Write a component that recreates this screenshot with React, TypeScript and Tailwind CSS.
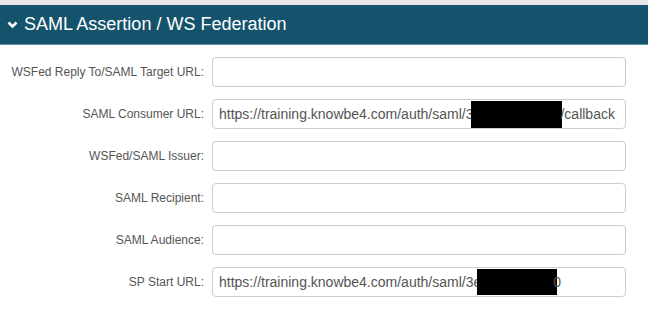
import React from 'react';

const font = { fontFamily: '"Liberation Sans", Arial, sans-serif' };

const Field: React.FC<{ label: string; children?: React.ReactNode }> = ({ label, children }) => (
  <div className="flex items-center h-[30px]">
    <label className="w-[212px] shrink-0 pr-[8px] text-right text-[12px] text-[#555]">{label}</label>
    <div className="w-[414px] h-[30px] border border-[#ccc] rounded-[4px] bg-white px-[6px] flex items-center text-[14px] text-[#555] whitespace-nowrap overflow-hidden">
      {children}
    </div>
  </div>
);

const App: React.FC = () => {
  return (
    <div className="w-[648px] h-[318px] bg-white overflow-hidden" style={font}>
      <div className="h-[5px] bg-[#e8e8e8]" />
      <div className="h-[40px] bg-[#15536d] border-b border-[#5f8ea1] flex items-center pl-[7px] text-white text-[18px]">
        <svg width="11" height="8" viewBox="0 0 11 8" className="mr-[6px] mt-[1px]">
          <path d="M1.5 1.5 L5.5 5.5 L9.5 1.5" fill="none" stroke="white" strokeWidth="2.6" />
        </svg>
        SAML Assertion / WS Federation
      </div>
      <div className="flex flex-col gap-[12px] pt-[12px]">
        <Field label="WSFed Reply To/SAML Target URL:" />
        <Field label="SAML Consumer URL:">
          <span>https://training.knowbe4.com/auth/saml/3</span>
          <span className="inline-block w-[91px] h-[27px] bg-black ml-[-2px] shrink-0" />
          <span className="ml-[-2px]">/callback</span>
        </Field>
        <Field label="WSFed/SAML Issuer:" />
        <Field label="SAML Recipient:" />
        <Field label="SAML Audience:" />
        <Field label="SP Start URL:">
          <span>https://training.knowbe4.com/auth/saml/3e</span>
          <span className="inline-block w-[80px] h-[26px] bg-black ml-[-4px] shrink-0" />
          <span className="ml-[-4px]">0</span>
        </Field>
      </div>
    </div>
  );
};

export default App;
